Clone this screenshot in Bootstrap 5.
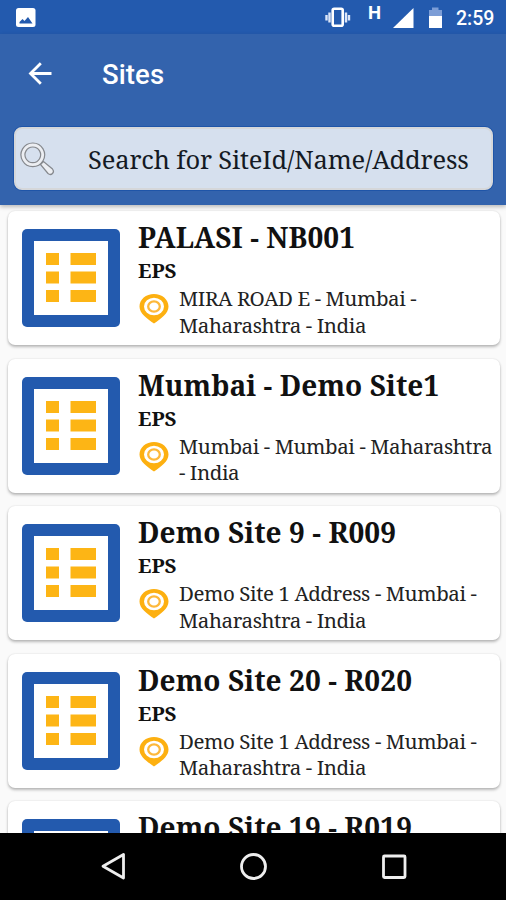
<!DOCTYPE html>
<html lang="en">
<head>
<meta charset="utf-8">
<meta name="viewport" content="width=device-width, initial-scale=1">
<title>Sites</title>
<link href="https://cdn.jsdelivr.net/npm/bootstrap@5.3.0/dist/css/bootstrap.min.css" rel="stylesheet">
<style>
html,body{height:100%}
body{font-family:"Noto Serif","Droid Serif","DejaVu Serif",serif;color:#111;background:#fafafa}
.phone{height:900px;width:506px}
.roboto{font-family:Roboto,sans-serif}
.statusbar{height:34px;background:#235aae;padding-right:11px}
.clock{font-size:19.5px;font-weight:500;line-height:37px;width:39px}
.net{font-size:18.5px;font-weight:700;line-height:26px;width:88px}
.appbar{height:171px;background:#3363ad;box-shadow:0 2px 4px rgba(0,0,0,.25);z-index:1}
.toolbar{height:80px;padding-left:24px}
.toolbar h1{font-size:27.5px;font-weight:500;margin-left:46px;line-height:32px;padding-top:2px;letter-spacing:.1px}
.searchbox{margin:13px 13px 0 14px;height:63px;border:2px solid #d5d7da;border-radius:8px;background:#d6e0ee;padding-left:4px;box-shadow:0 0 0 1px #1f55a8}
.searchbox span{font-size:25.5px;margin-left:32px;letter-spacing:-.16px;color:#141a24;padding-top:1px}
.sites{padding:6px 6px 0 8px}
.site{height:134px;margin-bottom:13.5px;border:0;border-radius:7px;box-shadow:0 2px 3px rgba(0,0,0,.26),0 0 2px rgba(0,0,0,.12);padding:18px 0 0 14px}
.site-body{margin:-10px 0 0 18px}
.site h2{font-size:28px;line-height:36px;font-weight:700;margin:0;letter-spacing:.08px}
.kind{font-size:20.5px;line-height:26px;font-weight:700;margin-top:2px}
.addr{font-size:20.5px;line-height:26.6px;margin-top:2px;letter-spacing:-.41px;color:#222}
.pin{margin:10px 10px 0 1px}
.navkeys{height:67px;background:#000}
</style>
</head>
<body>
<div class="phone d-flex flex-column overflow-hidden">
  <div class="statusbar roboto d-flex flex-shrink-0 text-white">
    <svg width="506" height="34" viewBox="0 0 506 34" class="position-absolute">
      <rect x="16" y="8" width="19.500" height="19" rx="2.500" fill="#fff"/>
      <path d="M19.500 23.500v-1.500l3-3 2 2 3.500-4 4.500 6.500z" fill="#235aae"/>
      <path d="M329.500 12.500v10M326.500 15v5.500M346 12.500v10M349 15v5.500" stroke="#dce6f8" stroke-width="2.400"/>
      <rect x="332.700" y="8.700" width="10" height="17" rx="1.500" fill="#235aae" stroke="#fff" stroke-width="2.600"/>
      <path d="M393 28L413.500 8v20z" fill="#fff"/>
      <path d="M429 16v-6h3V7.500h6.500V10h3.500v6z" fill="#7c9dd6"/>
      <path d="M429 16h13v12h-13z" fill="#fff"/>
    </svg>
    <span class="net ms-auto">H</span><span class="clock">2:59</span>
  </div>
  <header class="appbar flex-shrink-0 position-relative">
    <div class="toolbar roboto d-flex align-items-center text-white">
      <svg width="32" height="32" viewBox="0 0 32 32" fill="none" stroke="#fff" stroke-width="2.800"><path d="M27.500 15.500H7M16.800 5.200L6.500 15.500l10.300 10.300"/></svg>
      <h1 class="mb-0">Sites</h1>
    </div>
    <div class="searchbox d-flex align-items-center">
      <svg width="36" height="38" viewBox="0 0 36 38" class="flex-shrink-0" stroke="#85888d" stroke-width="1.200" fill="#eceef2"><path d="M20.500 24.500l3-3 9 7.500q2 2.500 0 4.500t-4.500 0z"/><path fill-rule="evenodd" d="M12.800 3a11.800 11.800 0 1 0 .01 0zM12.800 7a7.800 7.800 0 1 1-.01 0z"/></svg>
      <span class="text-nowrap">Search for SiteId/Name/Address</span>
    </div>
  </header>
  <main class="sites flex-fill overflow-hidden" id="sites"></main>
  <nav class="navkeys flex-shrink-0">
    <svg width="506" height="67" viewBox="0 0 506 67" fill="none" stroke="#eee" stroke-width="2.800" stroke-linejoin="round"><path d="M123.500 21.500v23.500L103 33.300z"/><circle cx="253.500" cy="33.500" r="12"/><rect x="383.500" y="23" width="21.500" height="21.500" rx="1"/></svg>
  </nav>
</div>
<svg class="d-none">
  <symbol id="ledger" viewBox="0 0 98 98"><rect width="98" height="98" rx="5" fill="#235aae"/><path d="M12 12h74v74H12z" fill="#fff"/><path d="M24 24h13v12H24zM48.500 24H74v12H48.500zM24 42.500h13v12H24zM48.500 42.500H74v12H48.500zM24 61h13v12H24zM48.500 61H74v12H48.500z" fill="#fdb515"/></symbol>
  <symbol id="marker" viewBox="0 0 30 32"><path d="M15 1C7 1 .5 6.400.5 13.500S8 25.500 15 30.500C22 25.500 29.500 20.600 29.500 13.500S23 1 15 1z" fill="#fdb010"/><ellipse cx="15" cy="13.500" rx="10" ry="8.700" fill="#fff"/><ellipse cx="15" cy="13.500" rx="5.800" ry="5.200" fill="#fff" stroke="#fdb83a" stroke-width="2.300"/></symbol>
</svg>
<script src="https://cdn.jsdelivr.net/npm/bootstrap@5.3.0/dist/js/bootstrap.bundle.min.js"></script>
<script>
const sites=[
["PALASI - NB001","MIRA ROAD E - Mumbai -","Maharashtra - India"],
["Mumbai - Demo Site1","Mumbai - Mumbai - Maharashtra","- India"],
["Demo Site 9 - R009","Demo Site 1 Address - Mumbai -","Maharashtra - India"],
["Demo Site 20 - R020","Demo Site 1 Address - Mumbai -","Maharashtra - India"],
["Demo Site 19 - R019"]];
document.getElementById("sites").innerHTML=sites.map(s=>`
<article class="card site flex-row align-items-start">
  <svg width="98" height="98" class="flex-shrink-0"><use href="#ledger"/></svg>
  <div class="site-body text-nowrap"><h2>${s[0]}</h2>${s[1]?`<div class="kind">EPS</div>
    <div class="d-flex"><svg width="30" height="32" class="pin flex-shrink-0"><use href="#marker"/></svg><div class="addr">${s[1]}<br>${s[2]}</div></div>`:""}</div>
</article>`).join("");
</script>
</body>
</html>
